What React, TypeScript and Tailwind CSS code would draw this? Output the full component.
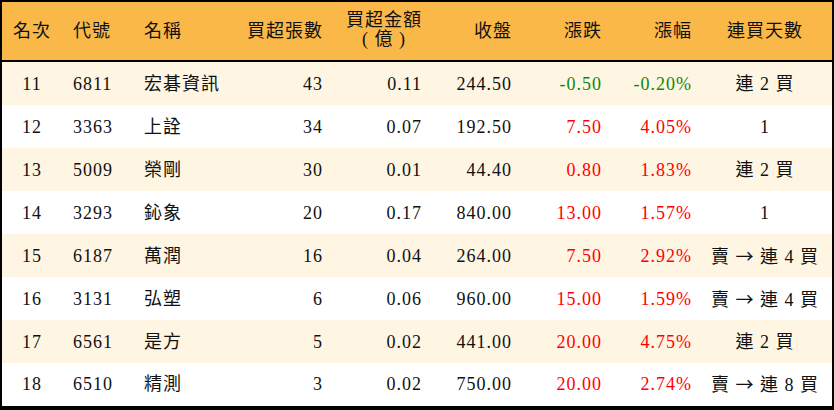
const COLS = [
  { key: 'rank', label: '名次', width: 'w-[60px]', align: 'justify-center' },
  { key: 'code', label: '代號', width: 'w-[72px]', align: 'justify-start pl-[11px]' },
  { key: 'name', label: '名稱', width: 'w-[98px]', align: 'justify-start pl-[10px]' },
  { key: 'qty', label: '買超張數', width: 'w-[98px]', align: 'justify-end pr-[7px]' },
  { key: 'amt', label: '買超金額', width: 'w-[98px]', align: 'justify-end pr-[6px]' },
  { key: 'close', label: '收盤', width: 'w-[90px]', align: 'justify-end pr-[6px]' },
  { key: 'chg', label: '漲跌', width: 'w-[90px]', align: 'justify-end pr-[6px]' },
  { key: 'pct', label: '漲幅', width: 'w-[90px]', align: 'justify-end pr-[6px]' },
  { key: 'days', label: '連買天數', width: 'w-[134px]', align: 'justify-center' },
];

const ROWS = [
  ['11', '6811', '宏碁資訊', '43', '0.11', '244.50', '-0.50', '-0.20%', '連 2 買'],
  ['12', '3363', '上詮', '34', '0.07', '192.50', '7.50', '4.05%', '1'],
  ['13', '5009', '榮剛', '30', '0.01', '44.40', '0.80', '1.83%', '連 2 買'],
  ['14', '3293', '鈊象', '20', '0.17', '840.00', '13.00', '1.57%', '1'],
  ['15', '6187', '萬潤', '16', '0.04', '264.00', '7.50', '2.92%', '賣 → 連 4 買'],
  ['16', '3131', '弘塑', '6', '0.06', '960.00', '15.00', '1.59%', '賣 → 連 4 買'],
  ['17', '6561', '是方', '5', '0.02', '441.00', '20.00', '4.75%', '連 2 買'],
  ['18', '6510', '精測', '3', '0.02', '750.00', '20.00', '2.74%', '賣 → 連 8 買'],
];

function cellColor(col: number, value: string) {
  if (col === 6 || col === 7) {
    return value.startsWith('-') ? 'text-[#0b8a0b]' : 'text-[#ff0000]';
  }
  return 'text-[#111]';
}

// the arrow needs the CJK font to come out full width
function DaysText({ value }: { value: string }) {
  const parts = value.split('→');
  if (parts.length === 1) return <span className="whitespace-pre">{value}</span>;
  return (
    <span className="whitespace-pre">
      {parts[0]}
      <span style={{ fontFamily: "'Noto Sans CJK TC', sans-serif" }}>→</span>
      {parts[1]}
    </span>
  );
}

export default function App() {
  return (
    <div
      className="w-[834px] h-[410px] bg-white border-2 border-b-4 border-black text-[18px] tracking-[1px] leading-none"
      style={{ fontFamily: "'Liberation Serif', 'Noto Sans CJK TC', serif" }}
    >
      {/* header */}
      <div className="flex h-[60px] bg-[#fab848] border-b-2 border-black text-[#111]">
        {COLS.map((c) => (
          <div key={c.key} className={`flex items-center ${c.width} ${c.align}`}>
            {c.key === 'amt' ? (
              <div className="flex flex-col items-center gap-[1px] -mt-[3px]">
                <span>買超金額</span>
                <span className="whitespace-pre">( 億 )</span>
              </div>
            ) : (
              <span>{c.label}</span>
            )}
          </div>
        ))}
      </div>

      {/* rows */}
      {ROWS.map((row, i) => (
        <div
          key={row[0]}
          className={`flex ${i === ROWS.length - 1 ? 'h-[42px]' : 'h-[43px]'} ${i % 2 === 0 ? 'bg-[#fef5e3]' : 'bg-white'}`}
        >
          {row.map((v, j) => (
            <div key={j} className={`flex items-center ${COLS[j].width} ${COLS[j].align} ${cellColor(j, v)}`}>
              {j === 8 ? <DaysText value={v} /> : <span className="whitespace-pre">{v}</span>}
            </div>
          ))}
        </div>
      ))}
    </div>
  );
}
